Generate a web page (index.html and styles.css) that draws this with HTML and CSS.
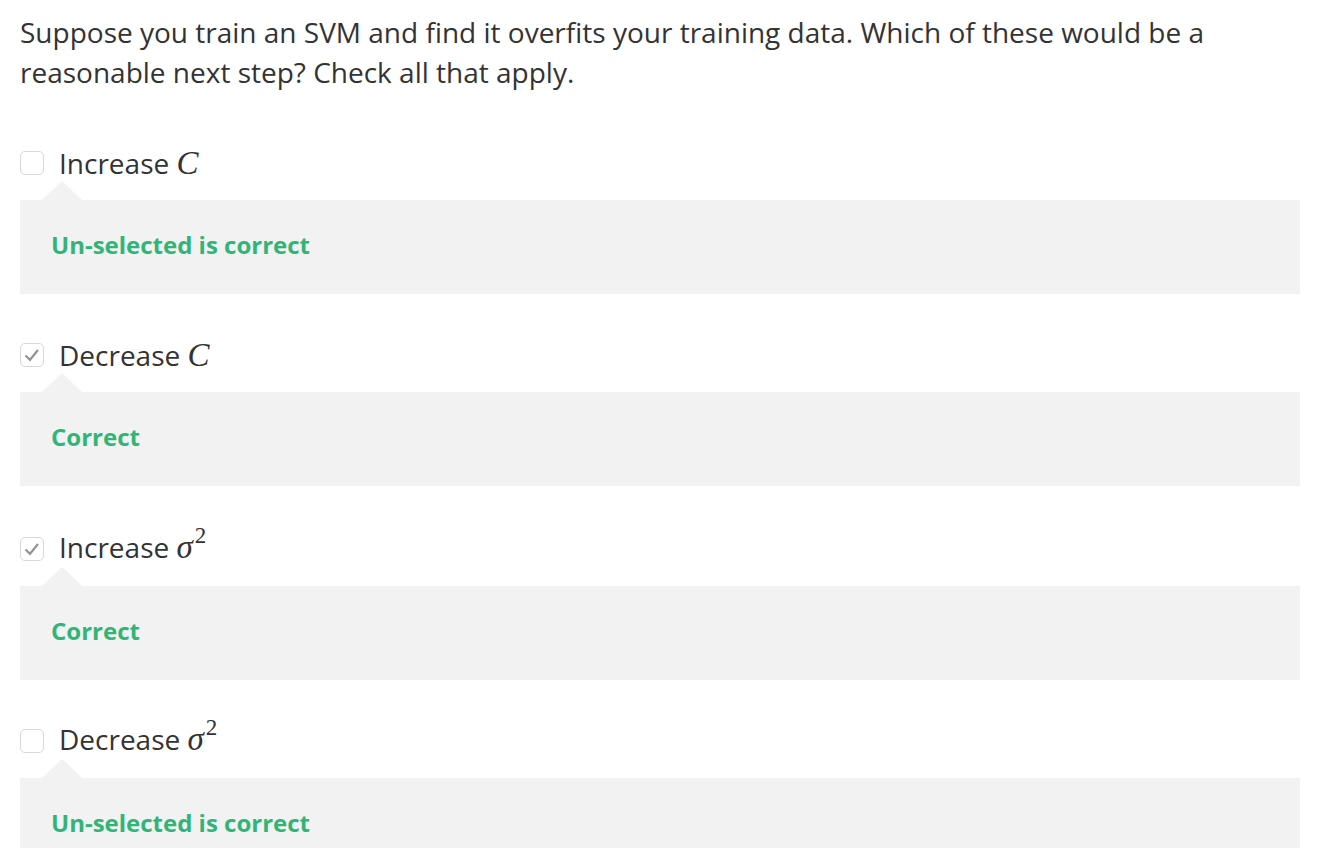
FILE: index.html
```html
<!DOCTYPE html>
<html>
<head>
<meta charset="utf-8">
<link rel="stylesheet" href="styles.css">
</head>
<body>
<div class="quiz">
  <p class="question">Suppose you train an SVM and find it overfits your training data. Which of these would be a reasonable next step? Check all that apply.</p>

  <div class="option">
    <span class="box"></span>
    <span class="label">Increase <span class="math">C</span></span>
  </div>
  <div class="feedback">Un-selected is correct</div>

  <div class="option">
    <span class="box checked"><svg viewBox="0 0 24 24" width="24" height="24"><path d="M5.5 12.5 L10 16.8 L18 7" fill="none" stroke="#949494" stroke-width="2.2"/></svg></span>
    <span class="label">Decrease <span class="math">C</span></span>
  </div>
  <div class="feedback">Correct</div>

  <div class="option option-sup">
    <span class="box checked"><svg viewBox="0 0 24 24" width="24" height="24"><path d="M5.5 12.5 L10 16.8 L18 7" fill="none" stroke="#949494" stroke-width="2.2"/></svg></span>
    <span class="label">Increase <span class="math">σ</span><sup class="sup">2</sup></span>
  </div>
  <div class="feedback">Correct</div>

  <div class="option">
    <span class="box"></span>
    <span class="label">Decrease <span class="math">σ</span><sup class="sup">2</sup></span>
  </div>
  <div class="feedback last">Un-selected is correct</div>
</div>
</body>
</html>
```

FILE: styles.css
```css
html, body {
  margin: 0;
  padding: 0;
  background: #ffffff;
}
body {
  font-family: "Open Sans", "Liberation Sans", sans-serif;
  color: #333333;
}
.quiz {
  padding: 0 20px;
}
.question {
  margin: 12px 0 49px 0;
  font-size: 28px;
  line-height: 40px;
}
.option {
  display: flex;
  align-items: center;
  height: 44px;
  margin-bottom: 15px;
}
.option-sup {
  padding-top: 2px;
}
.box {
  width: 22px;
  height: 22px;
  border: 1px solid #d8d8d8;
  border-radius: 5px;
  background: #fff;
  margin-right: 15px;
  flex: none;
  position: relative;
  overflow: hidden;
  box-sizing: content-box;
}
.box svg {
  position: absolute;
  left: -1px;
  top: -1px;
}
.label {
  font-size: 28px;
  line-height: 44px;
  white-space: nowrap;
}
.math {
  font-family: "Liberation Serif", "Times New Roman", serif;
  font-style: italic;
  font-size: 33px;
}
.sup {
  font-family: "Liberation Serif", "Times New Roman", serif;
  font-size: 23px;
  vertical-align: 0;
  position: relative;
  top: -15px;
  margin-left: 2px;
}
.feedback {
  position: relative;
  box-sizing: border-box;
  background: #f2f2f2;
  height: 94px;
  margin-bottom: 39px;
  padding: 29px 31px 0 31px;
  font-size: 24px;
  line-height: 32px;
  font-weight: 700;
  color: #31b577;
}
.feedback.last {
  height: 70px;
  margin-bottom: 0;
}
.feedback::before {
  content: "";
  position: absolute;
  left: 22px;
  top: -19px;
  border-left: 20px solid transparent;
  border-right: 20px solid transparent;
  border-bottom: 19px solid #f2f2f2;
}
```
